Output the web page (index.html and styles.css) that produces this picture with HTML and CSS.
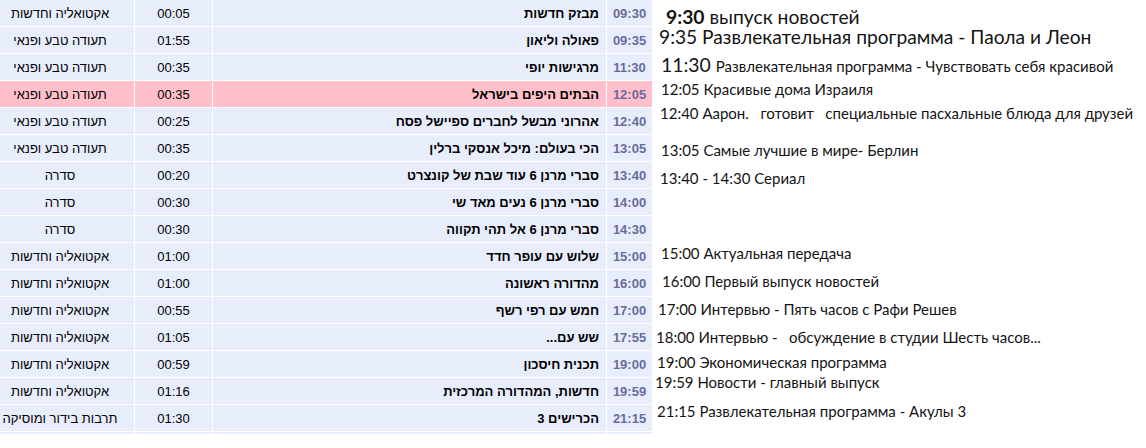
FILE: index.html
```html
<!DOCTYPE html>
<html lang="he">
<head>
  <meta charset="UTF-8">
  <title>לוח שידורים</title>
  <link rel="stylesheet" href="styles.css">
</head>
<body>
  <div class="page">
    <table class="guide" dir="rtl">
      <colgroup>
        <col class="c-time">
        <col class="c-title">
        <col class="c-len">
        <col class="c-genre">
      </colgroup>
      <tbody>
        <tr><td class="time">09:30</td><td class="title">מבזק חדשות</td><td>00:05</td><td>אקטואליה וחדשות</td></tr>
        <tr><td class="time">09:35</td><td class="title">פאולה וליאון</td><td>01:55</td><td>תעודה טבע ופנאי</td></tr>
        <tr><td class="time">11:30</td><td class="title">מרגישות יופי</td><td>00:35</td><td>תעודה טבע ופנאי</td></tr>
        <tr class="now"><td class="time">12:05</td><td class="title">הבתים היפים בישראל</td><td>00:35</td><td>תעודה טבע ופנאי</td></tr>
        <tr><td class="time">12:40</td><td class="title">אהרוני מבשל לחברים ספיישל פסח</td><td>00:25</td><td>תעודה טבע ופנאי</td></tr>
        <tr><td class="time">13:05</td><td class="title">הכי בעולם: מיכל אנסקי ברלין</td><td>00:35</td><td>תעודה טבע ופנאי</td></tr>
        <tr><td class="time">13:40</td><td class="title">סברי מרנן 6 עוד שבת של קונצרט</td><td>00:20</td><td>סדרה</td></tr>
        <tr><td class="time">14:00</td><td class="title">סברי מרנן 6 נעים מאד שי</td><td>00:30</td><td>סדרה</td></tr>
        <tr><td class="time">14:30</td><td class="title">סברי מרנן 6 אל תהי תקווה</td><td>00:30</td><td>סדרה</td></tr>
        <tr><td class="time">15:00</td><td class="title">שלוש עם עופר חדד</td><td>01:00</td><td>אקטואליה וחדשות</td></tr>
        <tr><td class="time">16:00</td><td class="title">מהדורה ראשונה</td><td>01:00</td><td>אקטואליה וחדשות</td></tr>
        <tr><td class="time">17:00</td><td class="title">חמש עם רפי רשף</td><td>00:55</td><td>אקטואליה וחדשות</td></tr>
        <tr><td class="time">17:55</td><td class="title">שש עם...</td><td>01:05</td><td>אקטואליה וחדשות</td></tr>
        <tr><td class="time">19:00</td><td class="title">תכנית חיסכון</td><td>00:59</td><td>אקטואליה וחדשות</td></tr>
        <tr><td class="time">19:59</td><td class="title">חדשות, המהדורה המרכזית</td><td>01:16</td><td>אקטואליה וחדשות</td></tr>
        <tr><td class="time">21:15</td><td class="title">הכרישים 3</td><td>01:30</td><td>תרבות בידור ומוסיקה</td></tr>
        <tr class="stub"><td></td><td></td><td></td><td></td></tr>
      </tbody>
    </table>

    <div class="ru" lang="ru">
      <p class="l1"><b>9:30</b> выпуск новостей</p>
      <p class="l2">9:35 Развлекательная программа - Паола и Леон</p>
      <p class="l3">11:30 <span class="small">Развлекательная программа - Чувствовать себя красивой</span></p>
      <p class="l4">12:05 Красивые дома Израиля</p>
      <p class="l5">12:40 Аарон.   готовит   специальные пасхальные блюда для друзей</p>
      <p class="l6">13:05 Самые лучшие в мире- Берлин</p>
      <p class="l7">13:40 - 14:30 Сериал</p>
      <p class="l8">15:00 Актуальная передача</p>
      <p class="l9">16:00 Первый выпуск новостей</p>
      <p class="l10">17:00 Интервью - Пять часов с Рафи Решев</p>
      <p class="l11">18:00 Интервью -   обсуждение в студии Шесть часов...</p>
      <p class="l12">19:00 Экономическая программа</p>
      <p class="l13">19:59 Новости - главный выпуск</p>
      <p class="l14">21:15 Развлекательная программа - Акулы 3</p>
    </div>
  </div>
</body>
</html>
```

FILE: styles.css
```css
body { margin: 0; background: #fff; font-family: "Liberation Sans", Arial, sans-serif; overflow: hidden; }
.page { display: flex; align-items: flex-start; }

/* hebrew schedule table */
.guide { border-spacing: 1px; table-layout: fixed; width: 668px; margin: -1px 0 0 -15px; flex: none; font-size: 13px; color: #000; }
.c-time { width: 45px; }
.c-title { width: 393px; }
.c-len { width: 77px; }
.c-genre { width: 148px; }
.guide td { background: #e8edfc; height: 26px; padding: 0; text-align: center; white-space: nowrap; overflow: hidden; }
.guide td.title { text-align: right; padding-right: 7px; font-weight: bold; }
.guide td.time { font-weight: bold; color: #6b6b9b; }
.guide tr.now td { background: #ffc0cb; }
.guide tr.stub td { height: 2px; }

/* russian translation on the right */
.ru { flex: 1; font-family: Lato, "Open Sans", sans-serif; color: #141414; font-size: 15px; }
.ru p { margin: 0; line-height: 20px; height: 20px; white-space: pre; }
.ru .small { font-size: 15px; }
.ru .l1 { font-size: 19.3px; margin: 7px 0 0 13px; }
.ru .l2 { font-size: 19.2px; margin: 0 0 0 6px; }
.ru .l3 { font-size: 19.4px; margin: 8px 0 0 8px; }
.ru .l4 { margin: 4px 0 0 8px; }
.ru .l5 { margin: 4px 0 0 7px; }
.ru .l6 { margin: 17px 0 0 8px; }
.ru .l7 { margin: 8px 0 0 7px; }
.ru .l8 { margin: 55px 0 0 8px; }
.ru .l9 { margin: 8px 0 0 9px; }
.ru .l10 { margin: 8px 0 0 5px; }
.ru .l11 { margin: 8px 0 0 3px; }
.ru .l12 { margin: 5px 0 0 4px; }
.ru .l13 { margin: 0 0 0 2px; }
.ru .l14 { margin: 9px 0 0 4px; }
```
